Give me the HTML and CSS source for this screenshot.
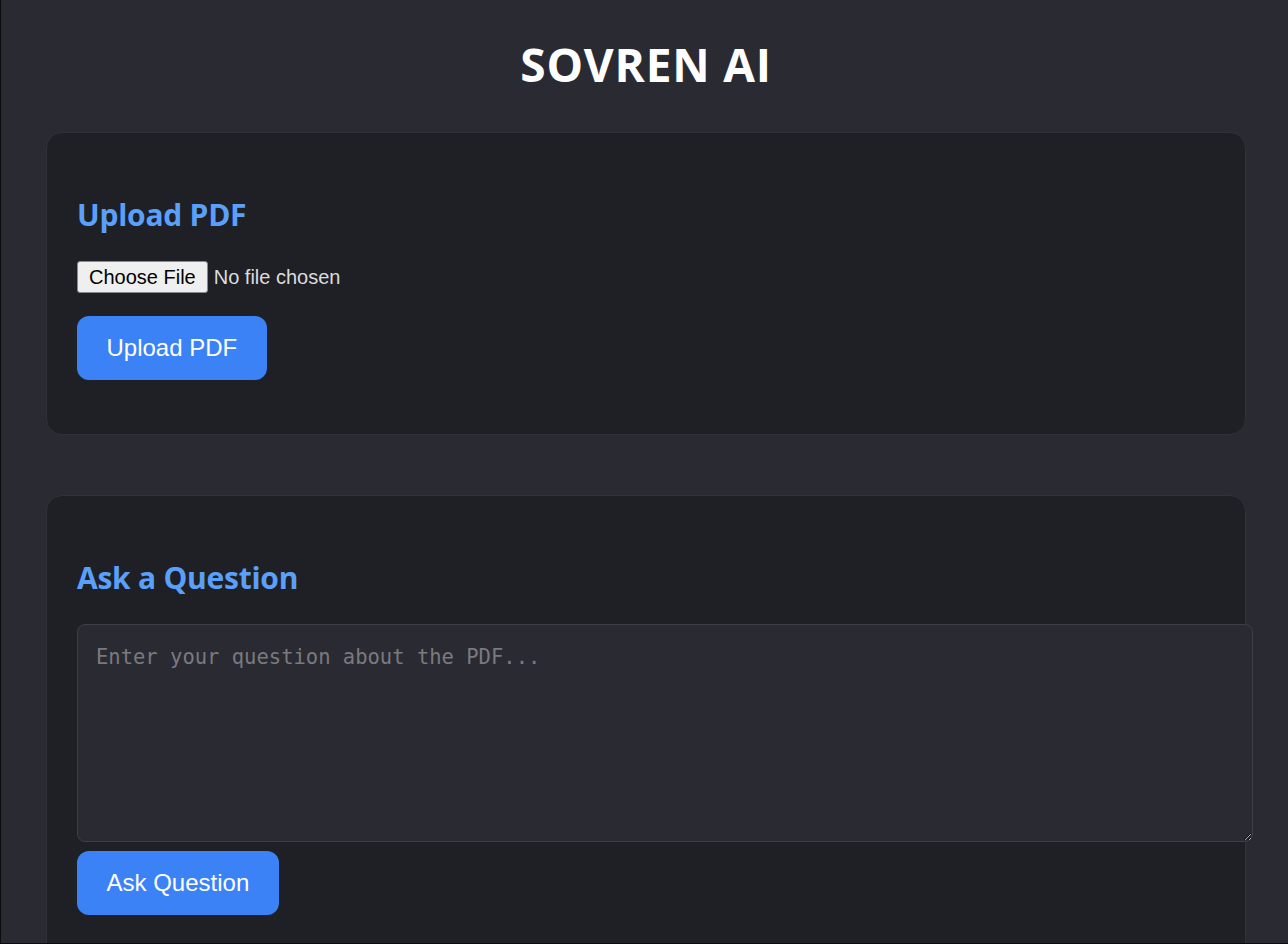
FILE: index.html
```html
<!DOCTYPE html>
<html lang="en">
<head>
<meta charset="utf-8">
<title>SOVREN AI</title>
<link rel="stylesheet" href="styles.css">
</head>
<body>
<div class="frame"></div>
<main class="container">
  <h1 class="title">SOVREN AI</h1>
  <section class="card">
    <h2 class="card-title">Upload PDF</h2>
    <input class="file-input" type="file" accept="application/pdf">
    <button class="btn btn-upload" type="button">Upload PDF</button>
  </section>
  <section class="card card-ask">
    <h2 class="card-title">Ask a Question</h2>
    <textarea class="question" placeholder="Enter your question about the PDF..."></textarea>
    <button class="btn btn-ask" type="button">Ask Question</button>
  </section>
</main>
</body>
</html>
```

FILE: styles.css
```css
html, body {
  margin: 0;
  padding: 0;
}

body {
  background: #2a2a33;
  font-family: "Open Sans", "Noto Sans", sans-serif;
  color: #ffffff;
}

.frame {
  position: fixed;
  inset: 0;
  border-left: 1px solid #0c0c0e;
  border-bottom: 1px solid #0c0c0e;
  pointer-events: none;
  z-index: 10;
}

.container {
  width: 1200px;
  margin: 0 auto;
  padding: 37px 0 40px;
  position: relative;
  left: 2px;
}

.title {
  margin: 0 0 40px;
  text-align: center;
  font-size: 46px;
  line-height: 55px;
  font-weight: 700;
  letter-spacing: 0.8px;
  color: #ffffff;
}

.card {
  background: #1f2026;
  border: 1px solid #303139;
  border-radius: 16px;
  padding: 30px;
  margin-bottom: 60px;
}

.card-title {
  margin: 34px 0 28px;
  font-size: 30px;
  line-height: 36px;
  font-weight: 700;
  color: #5aa0fa;
  letter-spacing: -0.25px;
}

.file-input {
  display: block;
  height: 32px;
  font-family: "Liberation Sans", Arial, sans-serif;
  font-size: 20px;
  color: #dcdcdc;
  margin: 0 0 23px;
  padding: 0;
}

.file-input::file-selector-button {
  font-family: "Liberation Sans", Arial, sans-serif;
  font-size: 20px;
  height: 32px;
  padding: 0 11px;
  margin: 0 6px 0 0;
  background: #efefef;
  color: #000000;
  border: 1px solid #8a8a8a;
  border-radius: 3px;
}

.btn {
  display: block;
  font-family: "Liberation Sans", Arial, sans-serif;
  font-size: 24px;
  line-height: 28px;
  padding: 18px 29.5px;
  background: #3b82f6;
  color: #ffffff;
  border: none;
  border-radius: 12px;
  margin: 0 0 24px;
}

.question {
  display: block;
  box-sizing: content-box;
  width: 100%;
  height: 180px;
  padding: 18px;
  margin: 0 0 9px;
  background: #2a2a33;
  border: 1px solid #3d3e46;
  border-radius: 8px;
  color: #e5e5e5;
  font-family: "DejaVu Sans Mono", "Liberation Mono", monospace;
  font-size: 20.5px;
  line-height: 28px;
}

.question::placeholder {
  color: #7a7a7e;
}
```
